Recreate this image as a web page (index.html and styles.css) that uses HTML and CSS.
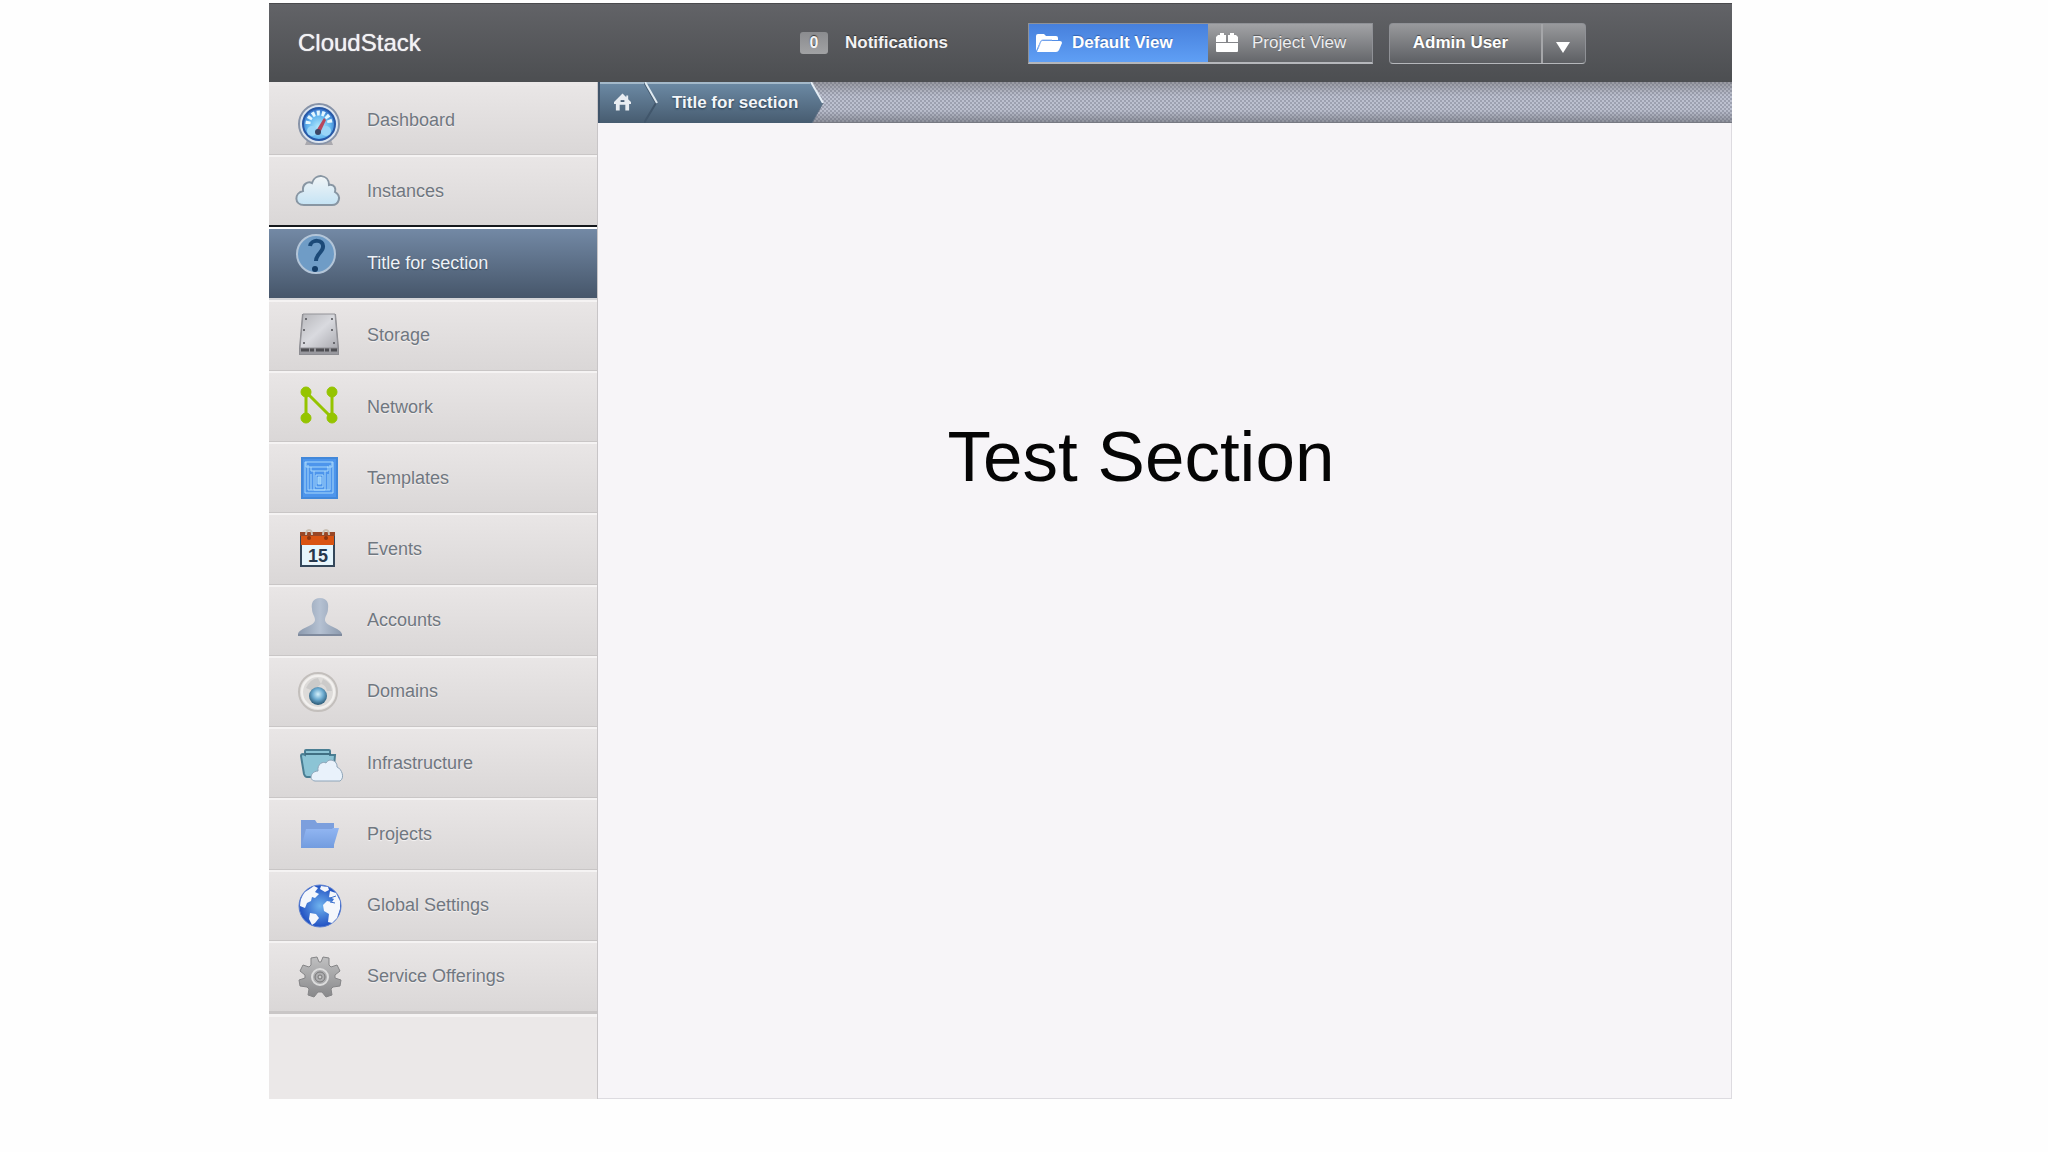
FILE: index.html
```html
<!DOCTYPE html>
<html lang="en">
<head>
    <meta charset="UTF-8">
    <meta name="viewport" content="width=device-width, initial-scale=1.0">
    <title>CloudStack</title>
    <link rel="stylesheet" href="styles.css">
</head>
<body>
    <div class="container">
        <header class="header">
            <a class="logo" href="#">CloudStack</a>
            <div class="controls">
                <button class="notifications" type="button">
                    <span class="total">0</span>
                    <span>Notifications</span>
                </button>
                <div class="view-switcher">
                    <button class="view active" type="button">
                        <svg width="28" height="20" viewBox="0 0 28 20" fill="#fff">
                            <path d="M1 18V3q0-2 2-2h6l2 2h10q2 0 2 2v2H8q-2 0-3 2z"/>
                            <path d="M7 8h18q2 0 2 2l-3 7q-1 2-3 2H2l3-9q1-2 2-2z"/>
                            <path d="M3 16l3-8q0-1 2-1h9" fill="none" stroke="#8fb6f2"/>
                        </svg>
                        Default View
                    </button>
                    <button class="view" type="button">
                        <svg width="22" height="20" viewBox="0 0 22 20" fill="#fff">
                            <path d="M0 9V4l2-2h2V0h4v2h2v7zM12 9V2h2V0h4v2h2l2 2v5zM0 10h22v8q0 1-1 1H1q-1 0-1-1z"/>
                        </svg>
                        Project View
                    </button>
                </div>
                <div class="user">
                    <button class="user-name" type="button">Admin User</button>
                    <button class="user-arrow" type="button" aria-label="User options">
                        <svg width="14" height="11" viewBox="0 0 14 11"><path d="M0 0h14L7 11z" fill="#fff"/></svg>
                    </button>
                </div>
            </div>
        </header>

        <div class="page">
            <nav class="sidebar">
                <ul class="menu">
                    <li>
                        <a href="#">
                            <svg class="icon" viewBox="0 0 48 56">
                                <defs>
                                    <radialGradient id="gauge" cx=".5" cy=".6" r=".6">
                                        <stop offset="0" stop-color="#b5ecfd"/>
                                        <stop offset=".6" stop-color="#62b5ee"/>
                                        <stop offset="1" stop-color="#2f68c4"/>
                                    </radialGradient>
                                </defs>
                                <path d="M13 48h24l2 5H11z" fill="#aaa9ae"/>
                                <circle cx="25" cy="32" r="20" fill="#dce5f0" stroke="#8793a8" stroke-width="2"/>
                                <circle cx="25" cy="32" r="16" fill="url(#gauge)" stroke="#2859a7" stroke-width="2"/>
                                <path d="M14 32a11 11 0 0 1 22 0" fill="none" stroke="#e3f7ff" stroke-width="5" stroke-dasharray="3 2"/>
                                <circle cx="18" cy="39" r="5" fill="#9ad6f8"/>
                                <circle cx="32" cy="39" r="5" fill="#9ad6f8"/>
                                <path d="M30 26l2 2-6 13-4-2z" fill="#b8475d"/>
                                <circle cx="24" cy="40" r="3" fill="#3c4664"/>
                            </svg>
                            Dashboard
                        </a>
                    </li>
                    <li class="before-active">
                        <a href="#">
                            <svg class="icon" viewBox="0 0 48 56">
                                <defs>
                                    <linearGradient id="cloud" x2="0" y2="1">
                                        <stop offset="0" stop-color="#f1f5f7"/>
                                        <stop offset="1" stop-color="#c5e3f4"/>
                                    </linearGradient>
                                </defs>
                                <path d="M10 42C0 42 0 30 9 28C8 21 14 18 18 20C21 10 35 11 35 22C41 21 42 26 41 29C48 33 45 42 38 42Z" fill="url(#cloud)" stroke="#8896a3" stroke-width="2"/>
                            </svg>
                            Instances
                        </a>
                    </li>
                    <li class="active">
                        <a href="#">
                            <svg class="icon" viewBox="0 0 48 56">
                                <circle cx="22" cy="18" r="19" fill="#6f9cc6" stroke="#b3c5d8" stroke-width="2"/>
                                <path d="M16 10C17 3 30 3 29 11C29 16 22 18 22 25" fill="none" stroke="#1c4a78" stroke-width="4"/>
                                <circle cx="21" cy="33" r="3" fill="#143c66"/>
                            </svg>
                            Title for section
                        </a>
                    </li>
                    <li>
                        <a href="#">
                            <svg class="icon" viewBox="0 0 48 56">
                                <defs>
                                    <linearGradient id="disk" x2="1" y2="1">
                                        <stop offset="0" stop-color="#b6b6ba"/>
                                        <stop offset=".5" stop-color="#d9dadf"/>
                                        <stop offset="1" stop-color="#aaaab0"/>
                                    </linearGradient>
                                </defs>
                                <path d="M8 6h34l3 34v7H5v-7z" fill="#8d8d92"/>
                                <path d="M9 6h32l3 34H6z" fill="url(#disk)" stroke="#939398"/>
                                <path d="M6 41h38v5H6z" fill="#98989e"/>
                                <path d="M7 42h36" stroke="#4e4e53" stroke-width="3" stroke-dasharray="8 1 4 2"/>
                                <g fill="#4e4e53">
                                    <circle cx="12" cy="11" r="1"/><circle cx="38" cy="11" r="1"/>
                                    <circle cx="10" cy="22" r="1"/><circle cx="38" cy="22" r="1"/>
                                    <circle cx="10" cy="35" r="1"/><circle cx="40" cy="35" r="1"/>
                                </g>
                            </svg>
                            Storage
                        </a>
                    </li>
                    <li>
                        <a href="#">
                            <svg class="icon" viewBox="0 0 48 56" fill="#95c400" stroke="#95c400">
                                <path d="M12 39V13L38 39V13" fill="none" stroke-width="3"/>
                                <circle cx="12" cy="13" r="5"/><circle cx="38" cy="13" r="5"/>
                                <circle cx="12" cy="39" r="5"/><circle cx="38" cy="39" r="5"/>
                            </svg>
                            Network
                        </a>
                    </li>
                    <li>
                        <a href="#">
                            <svg class="icon" viewBox="0 0 48 56">
                                <path d="M7 7h37v42H7z" fill="#4288da"/>
                                <path d="M9 9h33v38H9z" fill="#4d95ec"/>
                                <g fill="none" stroke="#a8d8fb">
                                    <path d="M11 12h28v31H11zM14 15v25h22V15M12 12v5h5M38 12v5h-5"/>
                                    <path d="M17 17h17v4H17zM20 21v19h11V21M22 25h7v12h-7zM17 24v16M34 24v16"/>
                                    <path d="M24 27h3v7h-3z" fill="#8fcaf9"/>
                                </g>
                            </svg>
                            Templates
                        </a>
                    </li>
                    <li>
                        <a href="#">
                            <svg class="icon" viewBox="0 0 48 56">
                                <path d="M7 11h33v33H7z" fill="#e6f6fd" stroke="#34475a" stroke-width="2"/>
                                <path d="M7 11h33v12H7z" fill="#d95413"/>
                                <path d="M6 10h35v4H6z" fill="#984726"/>
                                <path d="M12 13q0-5 3-5t3 5M29 13q0-5 3-5t3 5" fill="none" stroke="#c9c1b5" stroke-width="2"/>
                                <circle cx="15" cy="16" r="2" fill="#8a3510"/><circle cx="32" cy="16" r="2" fill="#8a3510"/>
                                <text class="day" x="24" y="40" text-anchor="middle">15</text>
                            </svg>
                            Events
                        </a>
                    </li>
                    <li>
                        <a href="#">
                            <svg class="icon" viewBox="0 0 48 56">
                                <defs>
                                    <linearGradient id="person" x2="1" y2="0">
                                        <stop offset="0" stop-color="#8b99ad"/>
                                        <stop offset=".5" stop-color="#b5c1d2"/>
                                        <stop offset="1" stop-color="#8b99ad"/>
                                    </linearGradient>
                                </defs>
                                <path d="M26 5c-7 0-9 5-8 11c0 5 3 7 3 11c0 6-16 8-17 14v2h44v-2c-1-6-17-8-17-14c0-4 3-6 3-11c1-6-1-11-8-11z" fill="url(#person)"/>
                                <path d="M4 42h44" stroke="#7f8a9d" stroke-width="2"/>
                            </svg>
                            Accounts
                        </a>
                    </li>
                    <li>
                        <a href="#">
                            <svg class="icon" viewBox="0 0 48 56">
                                <defs>
                                    <radialGradient id="ball" cx=".5" cy=".4" r=".6">
                                        <stop offset="0" stop-color="#d5f1fb"/>
                                        <stop offset=".5" stop-color="#6cabd0"/>
                                        <stop offset="1" stop-color="#295672"/>
                                    </radialGradient>
                                </defs>
                                <circle cx="24" cy="28" r="19" fill="#e6e4e2" stroke="#c3bfbc" stroke-width="2"/>
                                <circle cx="24" cy="28" r="16" fill="#dddbd9" stroke="#f3f1ef" stroke-width="2"/>
                                <path d="M12 24q4-9 12-10l3 6-8 7zM29 15q8 3 9 12h-5q-1-6-6-7z" fill="#cbcac9"/>
                                <circle cx="24" cy="32" r="9" fill="url(#ball)"/>
                            </svg>
                            Domains
                        </a>
                    </li>
                    <li>
                        <a href="#">
                            <svg class="icon" viewBox="0 0 48 56">
                                <path d="M11 20v-4q0-1 1-1h23q1 0 1 1v4h5l-2 22H13q-2 0-3-3L7 21q0-2 2-2z" fill="#8cc4d5" stroke="#4a7e93" stroke-width="2"/>
                                <path d="M11 19h26" stroke="#417083" stroke-width="2"/>
                                <path d="M21 46C14 45 17 36 24 36C23 29 29 26 32 28C35 22 44 26 43 32C48 34 51 43 46 46Z" fill="#e9f2fb" stroke="#8ea5b9" stroke-width="1"/>
                            </svg>
                            Infrastructure
                        </a>
                    </li>
                    <li>
                        <a href="#">
                            <svg class="icon" viewBox="0 0 48 56">
                                <defs>
                                    <linearGradient id="folder" x2="0" y2="1">
                                        <stop offset="0" stop-color="#92b6f2"/>
                                        <stop offset="1" stop-color="#729cdf"/>
                                    </linearGradient>
                                </defs>
                                <path d="M7 14h14l2 3h17v25H7z" fill="#7c9fdd"/>
                                <path d="M7 42l5-19h26l1-1h6l-6 20z" fill="url(#folder)"/>
                            </svg>
                            Projects
                        </a>
                    </li>
                    <li>
                        <a href="#">
                            <svg class="icon" viewBox="0 0 48 56">
                                <defs>
                                    <radialGradient id="globe">
                                        <stop offset="0" stop-color="#6fb3ee"/>
                                        <stop offset="1" stop-color="#2150c2"/>
                                    </radialGradient>
                                </defs>
                                <circle cx="26" cy="28" r="21" fill="url(#globe)" stroke="#5a7fd0"/>
                                <g fill="#f4f7fc">
                                    <path d="M11 14l9-6 4 2-3 4 4 2-4 4-3-1-1 4-4 2-2 5-5-2q0-8 5-14z"/>
                                    <path d="M27 8l7 1 1 3-4 2-5-3zM36 13l6 2 4 8v8l-3 9-5 5-4-1 1-8-5-3-1-6 4-4 5 1 2-3-5-2z"/>
                                    <path d="M16 35l6 1 3 4-4 5-3 2-3-6z"/>
                                </g>
                                <path d="M36 20l6-2M36 24l5 1" stroke="#3b70cc" fill="none"/>
                            </svg>
                            Global Settings
                        </a>
                    </li>
                    <li>
                        <a href="#">
                            <svg class="icon" viewBox="0 0 48 56">
                                <defs>
                                    <linearGradient id="gear" x2="0" y2="1">
                                        <stop offset="0" stop-color="#c0c0c1"/>
                                        <stop offset="1" stop-color="#88888a"/>
                                    </linearGradient>
                                </defs>
                                <path d="M17 9l6-1 2 5h2l2-5 6 1v7l2 2 6-2 3 6-5 4v3l6 2-1 6-7 1-2 2 1 6-6 2-4-5h-4l-4 5-6-2 1-6-2-2-7-1-1-6 6-2v-3l-5-4 3-6 6 2 2-2z" fill="url(#gear)" stroke="#858587" stroke-linejoin="round"/>
                                <circle cx="26" cy="28" r="8" fill="#adadaf" stroke="#ddd" stroke-width="2"/>
                                <circle cx="26" cy="28" r="5" fill="none" stroke="#777"/>
                                <circle cx="26" cy="28" r="2" fill="#ccc" stroke="#777"/>
                            </svg>
                            Service Offerings
                        </a>
                    </li>
                </ul>
                <div class="sidebar-bottom"></div>
            </nav>

            <main class="main">
                <div class="breadcrumbs">
                    <a class="home" href="#" aria-label="Home">
                        <svg width="17" height="18" viewBox="0 0 18 18" fill="#e9edf2">
                            <path d="M9 0l4 4V2h2v4l3 3v2h-2v7h-4v-6H6v6H2v-7H0V9z"/>
                            <path d="M7 7h4v2H7z" fill="#4c6178"/>
                        </svg>
                    </a>
                    <svg class="divider" width="14" height="41" viewBox="0 0 14 41" fill="none">
                        <path d="M0 0l12 21L0 41" stroke="#41566b" stroke-width="2"/>
                        <path d="M1 0l12 21" stroke="#dfeaf2" stroke-width="2"/>
                    </svg>
                    <a class="crumb" href="#">Title for section</a>
                    <svg width="14" height="41" viewBox="0 0 14 41">
                        <defs>
                            <linearGradient id="crumb" x2="0" y2="1">
                                <stop offset="0" stop-color="#6d8ba6"/>
                                <stop offset="1" stop-color="#475c70"/>
                            </linearGradient>
                        </defs>
                        <path d="M0 0h1l12 21L2 41H0z" fill="url(#crumb)"/>
                        <path d="M1 0l12 21" stroke="#e4ecf4" stroke-width="2"/>
                        <path d="M13 21L2 41" stroke="#5d6f83"/>
                    </svg>
                </div>
                <div class="content">
                    <h1>Test Section</h1>
                </div>
            </main>
        </div>
    </div>
</body>
</html>
```
FILE: styles.css
```css
* {
    margin: 0;
    padding: 0;
    box-sizing: border-box;
}

body {
    font-family: "Liberation Sans", Arial, Helvetica, sans-serif;
    font-size: 17px;
    background: #fefefe;
}

a {
    text-decoration: none;
}

button {
    border: none;
    background: none;
    font: inherit;
    cursor: pointer;
}

svg {
    display: block;
    flex: none;
}

.container {
    display: flex;
    flex-direction: column;
    margin: 3px 316px 0 269px;
    min-height: calc(100vh - 56px);
}

/* Header */
.header {
    display: flex;
    justify-content: space-between;
    align-items: center;
    height: 79px;
    padding: 0 146px 0 29px;
    background: linear-gradient(#626367, #4c4e51);
    border-top: 1px solid #4a4a4d;
}

.logo {
    font-size: 24px;
    color: #f2f2f4;
    text-shadow: 0 0 1px #f2f2f4;
}

.controls {
    display: flex;
    align-items: center;
}

.notifications {
    display: flex;
    align-items: center;
    gap: 17px;
    margin-right: 80px;
    color: #f3f3f5;
    font-weight: bold;
    text-shadow: 0 -1px 1px #333;
}

.total {
    width: 28px;
    border-radius: 3px;
    background: linear-gradient(#8b8c8f, #a1a2a4);
    line-height: 22px;
    font-size: 16px;
}

.view-switcher {
    display: flex;
    margin-right: 16px;
    border: 1px solid #8f9196;
    border-bottom: 2px solid #b5b7bb;
}

.view {
    display: flex;
    align-items: center;
    gap: 14px;
    height: 38px;
    width: 164px;
    padding: 0 8px;
    background: linear-gradient(#a2a3a6, #65676b);
    color: #eeeef0;
    text-shadow: 0 -1px 1px #55575b;
}

.view.active {
    gap: 9px;
    width: 179px;
    padding: 0 6px;
    background: linear-gradient(#4780dc, #5f9ff5);
    color: #fff;
    font-weight: bold;
    text-shadow: 0 -1px 1px #3563ae;
}

.user {
    display: flex;
    border: 1px solid #8f9196;
    border-bottom-color: #b5b7bb;
    border-radius: 4px;
    background: linear-gradient(#98999c, #5d5f63);
}

.user-name {
    width: 151px;
    height: 39px;
    padding-right: 10px;
    color: #fff;
    font-weight: bold;
    text-shadow: 0 -1px 1px #444;
}

.user-arrow {
    display: flex;
    justify-content: center;
    align-items: center;
    width: 44px;
    padding: 8px 2px 0 0;
    border-left: 2px solid #a5a6a9;
}

/* Sidebar */
.page {
    display: flex;
    flex: 1;
}

.sidebar {
    display: flex;
    flex-direction: column;
    flex: 0 0 329px;
    border-right: 1px solid #c8c5c7;
    background: #ebe8e8;
}

.menu {
    display: flex;
    flex-direction: column;
    flex: 1;
    padding-top: 2px;
    list-style: none;
}

.menu li {
    flex: 1;
    border-top: 2px solid #f5f3f3;
    border-bottom: 1px solid #c9c6c6;
    background: linear-gradient(#e9e6e6, #dad7d7);
}

.menu li:first-child {
    border-top-color: #ebe8e8;
}

.menu a {
    display: flex;
    align-items: center;
    gap: 25px;
    height: 100%;
    padding-left: 25px;
    font-size: 18px;
    color: #707780;
    text-shadow: 0 1px 1px #f5f3f3;
}

.menu .before-active {
    border-bottom: 2px solid #16191d;
}

.menu .active {
    border-top-color: #fff;
    border-bottom: 2px solid #d5d6d9;
    background: linear-gradient(#7389a5, #46566a);
}

.menu .active a {
    color: #eef2f7;
    text-shadow: 0 1px 1px #3b4a5c;
}

.icon {
    width: 48px;
    height: 56px;
    overflow: visible;
}

.day {
    font-size: 18px;
    font-weight: bold;
    fill: #26384d;
}

.sidebar-bottom {
    height: 87px;
    border-top: 2px solid #c9c6c6;
    box-shadow: inset 0 3px 0 #f5f3f3;
}

/* Main panel */
.main {
    display: flex;
    flex-direction: column;
    flex: 1;
    background: #f7f5f8;
    box-shadow: inset -1px -1px 0 #dddbe0;
}

.breadcrumbs {
    display: flex;
    height: 41px;
    background:
        radial-gradient(circle at 1px 1px, rgba(85, 88, 105, 0.3) 1px, transparent 1px) 0 0 / 4px 4px,
        radial-gradient(circle at 3px 3px, rgba(85, 88, 105, 0.3) 1px, transparent 1px) 0 0 / 4px 4px,
        linear-gradient(#97989f, #bcc0cf 35%, #bcc0cf 70%, #8e919b);
    border-bottom: 1px solid #777982;
}

.home,
.divider,
.crumb {
    display: flex;
    align-items: center;
    height: 41px;
    background: linear-gradient(#6d8ba6, #475c70);
    box-shadow: inset 0 2px 0 #a4b9ca;
}

.home {
    width: 46px;
    padding: 0 0 2px 14px;
    border-left: 2px solid #40546a;
}

.crumb {
    padding: 0 12px 0 14px;
    color: #f3f6f9;
    font-weight: bold;
    text-shadow: 0 1px 2px #26384b;
}

.content {
    padding: 293px 48px 0 0;
    text-align: center;
}

h1 {
    font-size: 71px;
    font-weight: normal;
    line-height: 82px;
    color: #050505;
}
```
